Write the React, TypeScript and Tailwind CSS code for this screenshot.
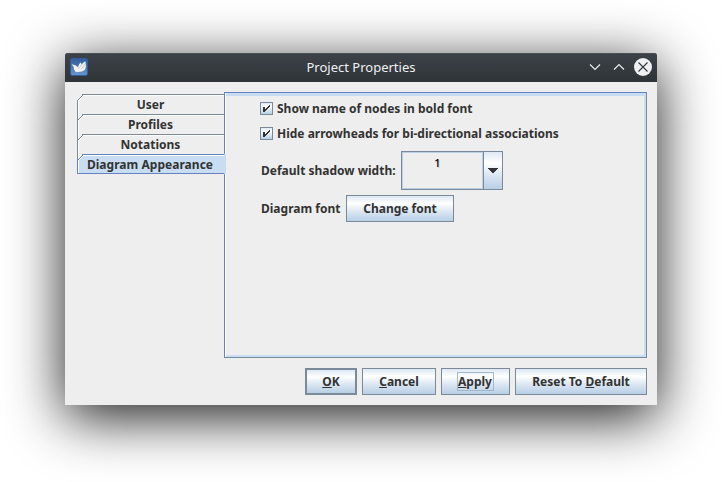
import React from "react";

const SURFACE =
  "bg-[linear-gradient(to_bottom,#dde8f3_0%,#ffffff_30%,#dde8f3_60%,#b8cfe5_100%)]";

function AppIcon() {
  return (
    <svg width="18" height="18" viewBox="0 0 18 18" className="block">
      <defs>
        <linearGradient id="tile" x1="0" y1="0" x2="0" y2="1">
          <stop offset="0" stopColor="#335c9b" />
          <stop offset="0.5" stopColor="#4878b4" />
          <stop offset="1" stopColor="#6b98cb" />
        </linearGradient>
      </defs>
      <rect x="0.5" y="0.5" width="17" height="17" rx="2" fill="url(#tile)" stroke="#315f9e" />
      <path
        d="M1.6 6.2 5.4 7.2 8 9.2 9.2 6 10.8 4.6 11.8 6.6 13.4 4.4 15.4 3.2 16 8.4 14.8 12 12 13.6 6 14.2 4 11.6 3.6 9Z"
        fill="#f1f1ee"
      />
      <path d="M8.2 10.6 10.4 8.6 11.8 6.2M11 11 13.6 8.8 14.6 5.6" stroke="#a9aeb5" strokeWidth="0.6" fill="none" />
    </svg>
  );
}

function TitleBar() {
  return (
    <div className="grid h-[29px] shrink-0 grid-cols-[1fr_auto_1fr] items-center rounded-t-[3px] bg-linear-to-b from-[#3d424a] to-[#2f3437] shadow-[inset_0_1px_0_#4a4f56]">
      <div className="pb-px pl-[5px]">
        <AppIcon />
      </div>
      <div className="pb-px text-[13px] leading-[18px] font-normal text-[#eff0f1]">Project Properties</div>
      <div className="flex justify-end pr-[5px] pb-px">
        <svg width="67" height="18" viewBox="0 0 67 18" fill="none">
          <path d="M5 6.5 10 11.5 15 6.5" stroke="#eff0f1" strokeWidth="1.1" />
          <path d="M29 11.5 34 6.5 39 11.5" stroke="#eff0f1" strokeWidth="1.1" />
          <circle cx="58" cy="9" r="9" fill="#eff0f1" />
          <path d="M53.5 4.5 62.5 13.5M62.5 4.5 53.5 13.5" stroke="#31363b" strokeWidth="1.1" />
        </svg>
      </div>
    </div>
  );
}

function Tab({ label, first = false, selected = false }: { label: string; first?: boolean; selected?: boolean }) {
  const line = selected ? "#6382bf" : "#7a8a99";
  return (
    <div className="flex h-5">
      <svg width="6" height="20" viewBox="0 0 6 20" shapeRendering="crispEdges">
        {selected && <path d="M2 6 6 2V20H2Z" fill="#c8ddf2" />}
        {!first && <path d="M0 0H1V6H0Z" fill="#7a8a99" />}
        {!first && <path d="M1 0H2V4H1Z" fill="#ffffff" />}
        <path d="M1 6H2V20H1ZM2 5H3V6H2ZM3 4H4V5H3ZM4 3H5V4H4ZM5 2H6V3H5ZM5 1H6V2H5Z" fill="#ffffff" />
        <path d="M0 6H1V20H0ZM1 5H2V6H1ZM2 4H3V5H2ZM3 3H4V4H3ZM4 2H5V3H4ZM5 1H6V2H5ZM5 0H6V1H5Z" fill={line} />
        {selected && <path d="M0 19H6V20H0Z" fill={line} />}
      </svg>
      <div className={selected ? "z-10 -mr-[2px] flex-1 bg-[#c8ddf2]" : "flex-1"}>
        <div
          className={
            selected
              ? "mr-[2px] h-5 border-y border-[#6382bf] pr-[7px] text-center leading-[19px] tracking-[0.03px] shadow-[inset_0_1px_0_#ffffff]"
              : "h-5 border-t border-[#7a8a99] pr-[6px] text-center leading-[19px] shadow-[inset_0_1px_0_#ffffff]"
          }
        >
          {label}
        </div>
      </div>
    </div>
  );
}

function CheckRow({ label }: { label: string }) {
  return (
    <div className="flex h-[13px] items-center gap-1">
      <div className={"flex size-[13px] items-center justify-center border border-[#7a8a99] " + SURFACE}>
        <svg width="11" height="11" viewBox="0 0 11 11" shapeRendering="crispEdges">
          <path d="M2 4H4V9H2ZM4 6H5V8H4ZM5 5H6V7H5ZM6 4H7V6H6ZM7 3H8V5H7ZM8 2H9V4H8Z" fill="#333333" />
        </svg>
      </div>
      <span className="leading-[16px]">{label}</span>
    </div>
  );
}

function Button({ className, children }: { className: string; children: React.ReactNode }) {
  return (
    <button className={"flex h-[27px] items-center justify-center border-[#7a8a99] font-bold " + SURFACE + " " + className}>
      {children}
    </button>
  );
}

function Key({ children }: { children: string }) {
  return <span className="underline decoration-[#333333] decoration-1 underline-offset-[1px]">{children}</span>;
}

export default function App() {
  return (
    <div className="h-[482px] w-[722px] overflow-hidden bg-white px-[65px] pt-[53px] font-['Noto_Sans',sans-serif] text-[12px] font-bold whitespace-nowrap text-[#333333]">
      <div className="flex h-[352px] w-[592px] flex-col rounded-t-[3px] bg-[#eeeeee] shadow-[0_12px_56px_rgba(0,0,0,0.9)]">
        <TitleBar />
        <div className="flex pt-[10px] pr-[10px] pl-3">
          <div className="w-[147px] pt-[2px]">
            <Tab label="User" first />
            <Tab label="Profiles" />
            <Tab label="Notations" />
            <Tab label="Diagram Appearance" selected />
          </div>
          <div className="h-[266px] w-[423px] border border-[#6382bf] border-r-[#7a8a99] border-b-[#7a8a99]">
            <div className="h-full border-l border-white">
              <div className="flex h-full flex-col border-t-[3px] border-r-2 border-b-2 border-[#c8ddf2] pt-[6px] pl-[34px]">
                <CheckRow label="Show name of nodes in bold font" />
                <div className="h-3" />
                <CheckRow label="Hide arrowheads for bi-directional associations" />
                <div className="mt-[11px] flex items-center pl-px">
                  <span className="w-[140px]">Default shadow width:</span>
                  <div className="flex h-[39px] w-[102px] border border-[#7a8a99]">
                    <div className="flex w-[81px] justify-center border border-[#b8cfe5] pt-px pr-[10px] text-[11px] leading-[18px] font-medium text-black [text-shadow:1px_1px_0_#cccccc]">
                      1
                    </div>
                    <div className={"flex flex-1 items-center justify-center border-l border-[#7a8a99] " + SURFACE}>
                      <svg width="10" height="5" viewBox="0 0 10 5" shapeRendering="crispEdges">
                        <path d="M0 0H10V1H9V2H8V3H7V4H6V5H4V4H3V3H2V2H1V1H0Z" fill="#333333" />
                      </svg>
                    </div>
                  </div>
                </div>
                <div className="mt-[5px] flex items-center pl-px">
                  <span className="w-[85px]">Diagram font</span>
                  <Button className="w-[108px] border">Change font</Button>
                </div>
              </div>
            </div>
          </div>
        </div>
        <div className="mt-[10px] flex justify-end gap-[5px] pr-[10px]">
          <Button className="w-[52px] border-2">
            <span>
              <Key>O</Key>K
            </span>
          </Button>
          <Button className="w-[74px] border">
            <span>
              <Key>C</Key>ancel
            </span>
          </Button>
          <Button className="w-[69px] border">
            <span className="h-[19px] w-[37px] border border-[#a3b8cc] text-left leading-[17px]">
              <Key>A</Key>pply
            </span>
          </Button>
          <Button className="w-[132px] border">
            <span>
              Reset To <Key>D</Key>efault
            </span>
          </Button>
        </div>
      </div>
    </div>
  );
}
